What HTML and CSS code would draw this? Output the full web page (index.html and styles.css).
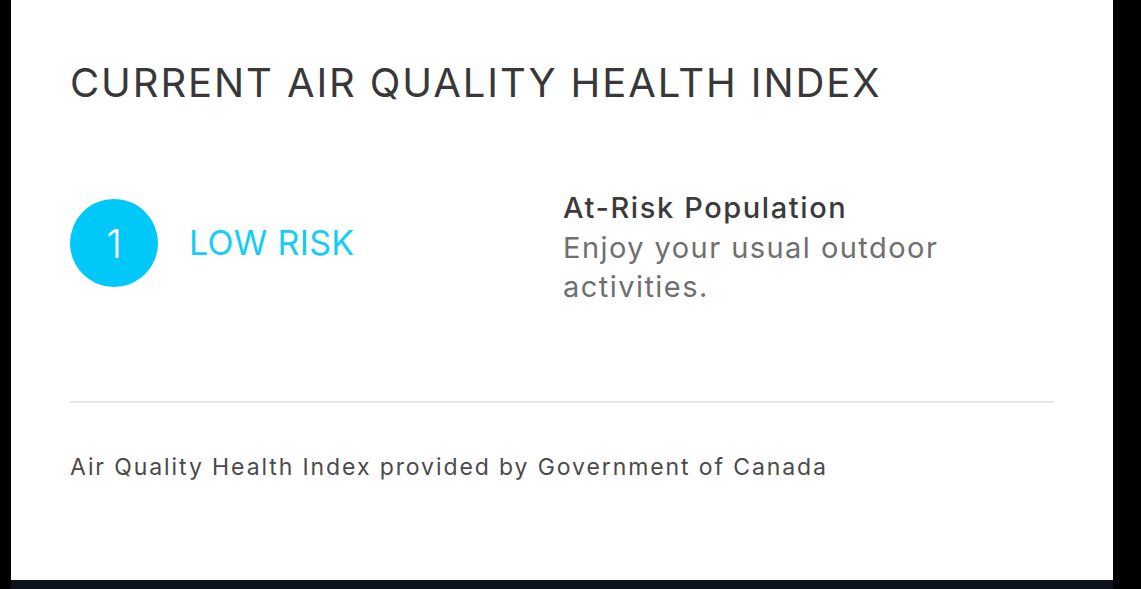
FILE: index.html
```html
<!DOCTYPE html>
<html>
<head>
<meta charset="utf-8">
<link rel="stylesheet" href="styles.css">
</head>
<body>
<div class="screen">
  <div class="frame">
    <div class="card">
      <h1 class="title">CURRENT AIR QUALITY HEALTH INDEX</h1>
      <div class="row">
        <div class="level">
          <div class="badge">1</div>
          <div class="risk">LOW RISK</div>
        </div>
        <div class="advice">
          <div class="advice-title">At-Risk Population</div>
          <div class="advice-text">Enjoy your usual outdoor activities.</div>
        </div>
      </div>
      <div class="divider"></div>
      <div class="source">Air Quality Health Index provided by Government of Canada</div>
    </div>
    <div class="strip"></div>
  </div>
</div>
</body>
</html>
```
FILE: styles.css
```css
html, body {
  margin: 0;
  padding: 0;
  background: #000;
}
.screen {
  width: 1141px;
  height: 589px;
  padding-left: 11px;
  box-sizing: border-box;
  background: #000;
  font-family: Inter, "Noto Sans", sans-serif;
}
.frame {
  width: 1102px;
  display: flex;
  flex-direction: column;
}
.card {
  height: 580px;
  box-sizing: border-box;
  background: #fff;
  padding: 0 59px;
  display: flex;
  flex-direction: column;
}
.strip {
  height: 9px;
  background: #0e121a;
}
.title {
  margin: 58px 0 0 0;
  font-size: 40px;
  line-height: 50px;
  font-weight: 400;
  color: #383838;
  letter-spacing: 1.9px;
}
.row {
  display: flex;
  margin-top: 80px;
}
.level {
  width: 493px;
  display: flex;
  align-items: center;
  align-self: flex-start;
  margin-top: 11px;
}
.badge {
  width: 88px;
  height: 88px;
  border-radius: 50%;
  background: #00c8f8;
  color: #fff;
  font-size: 40px;
  display: flex;
  align-items: center;
  justify-content: center;
  font-weight: 300;
}
.risk {
  margin-left: 31px;
  font-size: 34px;
  line-height: 40px;
  color: #14cdf8;
  font-weight: 400;
  letter-spacing: 0.3px;
}
.advice {
  flex: 1;
}
.advice-title {
  font-size: 29px;
  line-height: 40px;
  font-weight: 500;
  color: #3b3b3b;
  letter-spacing: 1.6px;
}
.advice-text {
  font-size: 29px;
  line-height: 39px;
  color: #6f6f6f;
  width: 420px;
  letter-spacing: 1.45px;
}
.divider {
  height: 2px;
  background: #e6e6e6;
  margin-top: 95px;
}
.source {
  margin-top: 49px;
  font-size: 23px;
  line-height: 30px;
  color: #4a4a4a;
  letter-spacing: 1.9px;
}
```
